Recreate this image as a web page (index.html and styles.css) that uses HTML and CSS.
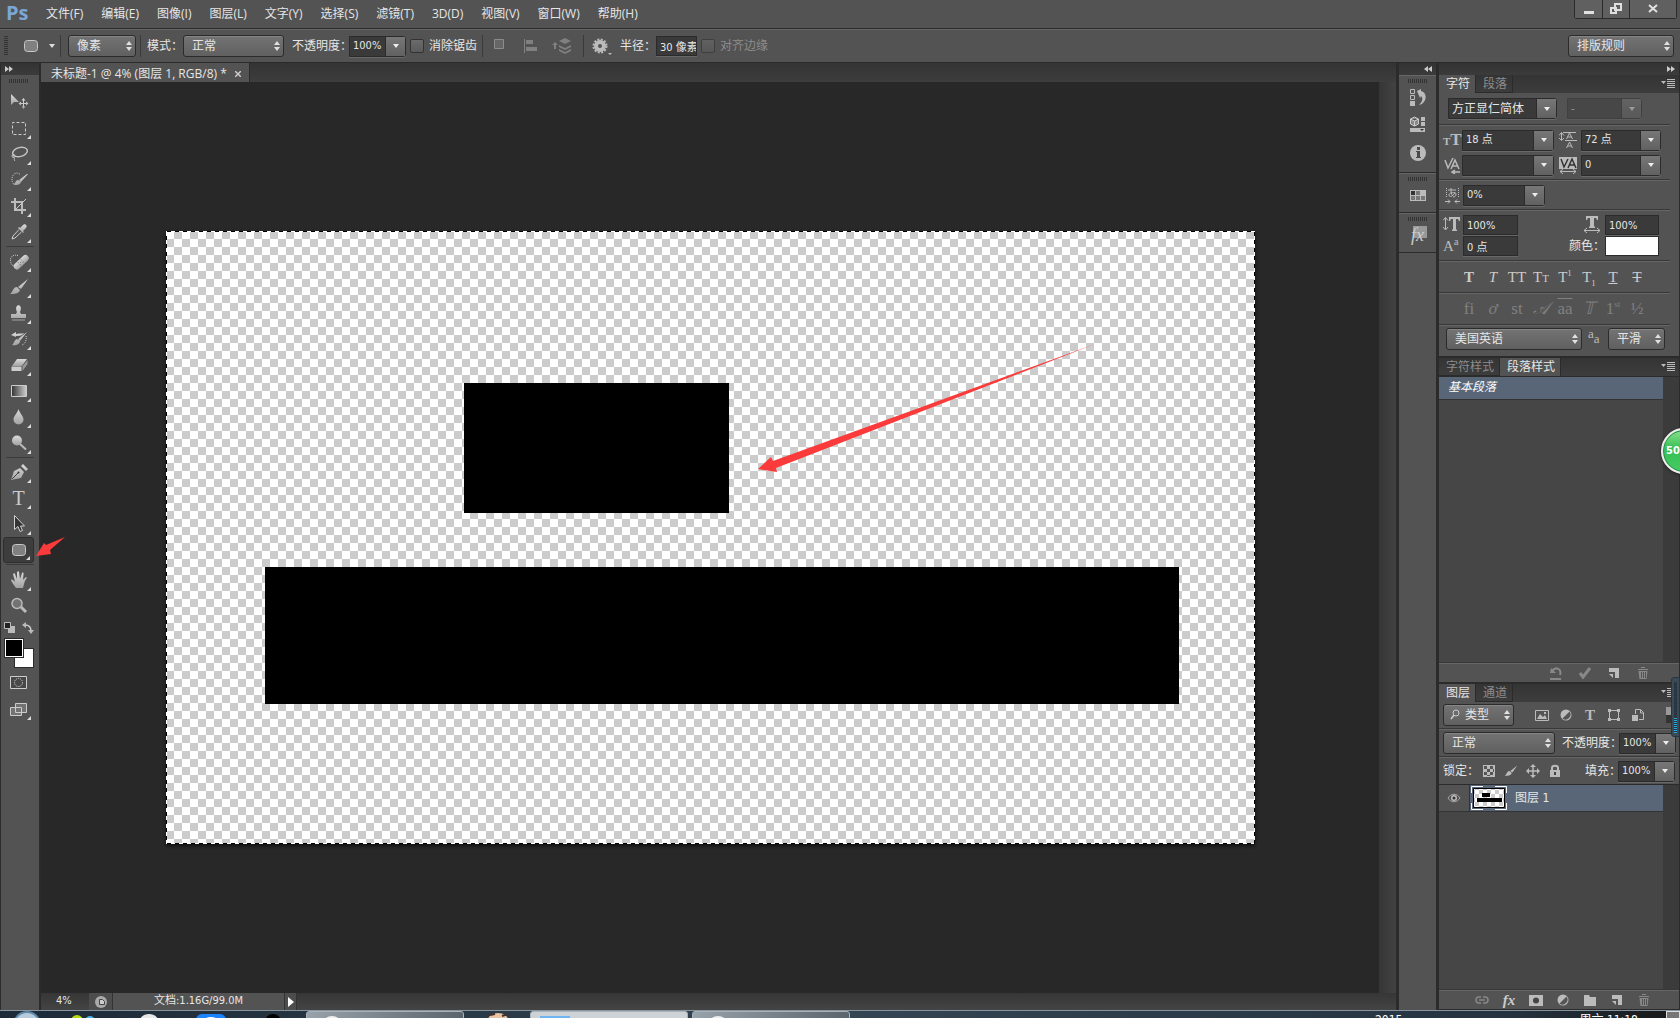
FILE: index.html
```
<!DOCTYPE html>
<html lang="zh-CN">
<head>
<meta charset="utf-8">
<title>未标题-1</title>
<link rel="stylesheet" href="styles.css">
</head>
<body>
<svg class="defs" aria-hidden="true">
  <defs>
    <linearGradient id="metal" x1="0" y1="0" x2="0" y2="1"><stop offset="0" stop-color="#dadada"/><stop offset="1" stop-color="#a2a2a2"/></linearGradient>
    <linearGradient id="fade"><stop offset="0" stop-color="#333"/><stop offset="1" stop-color="#d0d0d0"/></linearGradient>
    <pattern id="checks" width="8" height="8" patternUnits="userSpaceOnUse"><path fill="#fff" d="M0 0h8v8H0z"/><path fill="#ccc" d="M4 0h4v4H4zM0 4h4v4H0z"/></pattern>
  </defs>
  <symbol id="updown" viewBox="0 0 6 10"><path d="M0 4 3 0l3 4zM0 6l3 4 3-4z"/></symbol>
  <symbol id="down" viewBox="0 0 6 4"><path d="M0 0h6L3 4z"/></symbol>
  <symbol id="menu" viewBox="0 0 14 9"><path d="M0 2h5L2.500 5zM6 0h8v1H6zM6 2h8v1H6zM6 4h8v1H6zM6 6h8v1H6zM6 8h8v1H6z"/></symbol>
  <symbol id="dbl" viewBox="0 0 8 6"><path d="M0 0l4 3-4 3zM4 0l4 3-4 3z"/></symbol>
  <symbol id="move" viewBox="0 0 20 20"><path d="M2 2v11l3-3h5z"/><path fill="none" stroke="#ccc" d="M14.500 7v9M10 11.500h9"/><path d="M14.500 6l2 2.500h-4zM14.500 17l2-2.500h-4zM9.500 11.500l2.500-2v4zM19.500 11.500l-2.500-2v4z"/></symbol>
  <symbol id="marquee" viewBox="0 0 20 20"><path fill="none" stroke="#ccc" stroke-dasharray="3 2" stroke-dashoffset="1" d="M3.500 4.500h13v12h-13z"/></symbol>
  <symbol id="lasso" viewBox="0 0 20 20"><ellipse cx="11" cy="8" rx="7.500" ry="4.500" transform="rotate(-14 11 8)" fill="none" stroke="#c4c4c4" stroke-width="1.500"/><circle cx="4.500" cy="12" r="1.500" fill="none" stroke="#c4c4c4"/><path fill="none" stroke="#c4c4c4" d="M4 13c3 1 0 2 2 4"/></symbol>
  <symbol id="quick" viewBox="0 0 20 20"><path fill="none" stroke="#ccc" stroke-dasharray="1 1" d="M11 4.500C8 1 3 4 3 9s3 7 5 5"/><path d="M19 4l-7 8-2-2 8-6zM9 10l3 2c-1 3-5 4-8 2 3 0 2-4 5-4z"/></symbol>
  <symbol id="crop" viewBox="0 0 20 20"><path fill="none" stroke="#bbb" stroke-width="2" d="M6 2v12h11M2 6h11v12"/><path stroke="#ccc" d="M5 15 17 3"/></symbol>
  <symbol id="dropper" viewBox="0 0 20 20"><path d="M11 6l3-3c2-2 5 1 3 3l-3 3 1 1-1 1-5-5 1-1z"/><path fill="#555" stroke="#ccc" d="M10 7.500 4 14l-1 3 3-1 6.500-6"/></symbol>
  <symbol id="heal" viewBox="0 0 20 20"><path fill="none" stroke="#ccc" stroke-dasharray="1 1" d="M9 4.500C4 3 1.500 6 1.500 9s1 5 3 6"/><g transform="rotate(-43 12 11)"><rect x="3" y="8" width="18" height="6.500" rx="3"/><path fill="#666" d="M9 9h1v1H9zM13 9h1v1h-1zM9 12h1v1H9zM13 12h1v1h-1zM11 10.500h1v1h-1z"/></g></symbol>
  <symbol id="brush" viewBox="0 0 20 20"><path d="M19 2l-7 10-3-2zM8 10l3 3c-1 4-6 4-10 4 3-2 3-7 7-7z"/></symbol>
  <symbol id="stamp" viewBox="0 0 20 20"><path d="M8 9C4 0 15 0 11 9l1 2h5v4H2v-4h5zM3 16.500h13v1H3z"/></symbol>
  <symbol id="history" viewBox="0 0 20 20"><path d="M18 3l-7 9-2-2zM8 10l3 2c0 3-4 5-8 4 2-1 2-5 5-6zM2 6l5-3v2c4-1 6 0 8-1-2 3-5 3-8 3v1z"/><path fill="none" stroke="#ccc" stroke-dasharray="1 1" d="M17 7c1 4-1 8-4 9"/></symbol>
  <symbol id="eraser" viewBox="0 0 20 20"><path d="M8 4h10l-5 7H3z"/><path fill="#999" d="M13.500 11.500 18.500 5v4l-5 7z"/><path fill="#ccc" d="M2.500 11.500h10V16h-10z"/></symbol>
  <symbol id="gradient" viewBox="0 0 20 20"><path fill="url(#fade)" stroke="#ccc" d="M2.500 4.500h15v11h-15z"/></symbol>
  <symbol id="blur" viewBox="0 0 20 20"><path d="M9.500 2c1 4 5 7 5 10.500a5 5 0 0 1-10 0C4.500 9 8.500 6 9.500 2z"/></symbol>
  <symbol id="dodge" viewBox="0 0 20 20"><circle cx="8" cy="7.500" r="5"/><path fill="none" stroke="#bbb" stroke-width="2" d="M11 11l6 5.500"/></symbol>
  <symbol id="pen" viewBox="0 0 20 20"><path d="M2 18l3-9 6-3 4 4-3 6zM12 4l2-2 5 5-2 2z"/><path stroke="#444" fill="none" d="M3 17l6-6"/><circle cx="9.500" cy="10.500" r="1" fill="#333"/></symbol>
  <symbol id="patharrow" viewBox="0 0 20 20"><path fill="#333" stroke="#d0d0d0" d="M5.500 1.500v14l3.500-3 2 5 2.500-1-2-4.500h4z"/></symbol>
  <symbol id="rrect" viewBox="0 0 20 20"><rect x="3.500" y="4.500" width="13" height="11" rx="3" fill="#808080" stroke="#c8c8c8"/></symbol>
  <symbol id="hand" viewBox="0 0 20 20"><path d="M7 18c-2-3-4-5-5-8 1-1 2 0 4 2L4 4c1-1 2-1 2 0l2 5V2c1-1 2-1 2 0l1 7 2-6c1-1 2 0 1.500 1L14 10l3-3c1 0 1 1 0 2-2 3-2 6-3 9z"/></symbol>
  <symbol id="zoom" viewBox="0 0 20 20"><path stroke="#bbb" stroke-width="3" d="M12 11l5 5"/><circle cx="8" cy="7.500" r="5" fill="#737373" stroke="#bbb" stroke-width="1.500"/></symbol>
  <symbol id="mask" viewBox="0 0 20 20"><path fill="#484848" stroke="#ccc" d="M1.500 4.500h16v12h-16z"/><circle cx="9.500" cy="10.500" r="4" fill="none" stroke="#ddd" stroke-dasharray="1 1"/></symbol>
  <symbol id="screens" viewBox="0 0 20 20"><path fill="#737373" stroke="#ccc" d="M1.500 8.500h11v8h-11zM6.500 4.500h11v9h-11z"/></symbol>
  <symbol id="new" viewBox="0 0 14 14"><path d="M2 2h10v10H8V6H2zM2 8h4v4z"/></symbol>
  <symbol id="trash" viewBox="0 0 14 14"><path d="M2 3h10v1H2zM5 1h4v1H5zM2.500 5h9l-1 8h-7z"/><path stroke="#535353" d="M5.500 6v6M7.500 6v6M9.500 6v6"/></symbol>
  <symbol id="half" viewBox="0 0 14 14"><circle cx="7" cy="7" r="5.500"/><path fill="#555" d="M3.500 10.500 10.500 3.500a5 5 0 0 1-7 7z"/></symbol>
</svg>

<div class="app">
  <header class="menubar">
    <h1 class="logo">Ps</h1>
    <nav class="menus">
      <a href="#">文件(F)</a><a href="#">编辑(E)</a><a href="#">图像(I)</a><a href="#">图层(L)</a><a href="#">文字(Y)</a><a href="#">选择(S)</a><a href="#">滤镜(T)</a><a href="#">3D(D)</a><a href="#">视图(V)</a><a href="#">窗口(W)</a><a href="#">帮助(H)</a>
    </nav>
    <div class="window-buttons">
      <button aria-label="最小化"><svg width="12" height="12"><path d="M1 8h10v3H1z"/></svg></button>
      <button aria-label="还原"><svg width="12" height="12"><path fill="none" stroke="#e0e0e0" stroke-width="2" d="M5 1h6v6H5zM1 5h5v5H1z"/></svg></button>
      <button class="close" aria-label="关闭"><svg width="12" height="12"><path stroke="#e0e0e0" stroke-width="2" d="M2 2l8 7M10 2 2 9"/></svg></button>
    </div>
  </header>

  <section class="options">
    <i class="grip-v"></i>
    <button class="preset" aria-label="圆角矩形工具"><svg width="20" height="20"><use href="#rrect"/></svg><svg width="6" height="4"><use href="#down"/></svg></button>
    <i class="vline"></i>
    <span class="sel w68"><select aria-label="绘制模式"><option>像素</option></select><svg><use href="#updown"/></svg></span>
    <i class="vline"></i>
    <label for="mode">模式：</label>
    <span class="sel w101"><select id="mode"><option>正常</option></select><svg><use href="#updown"/></svg></span>
    <label class="after" for="opacity">不透明度：</label>
    <span class="combo w56"><input id="opacity" value="100%"><button aria-label="不透明度列表"><svg><use href="#down"/></svg></button></span>
    <label class="tick"><input type="checkbox">消除锯齿</label>
    <i class="vline"></i>
    <button class="icon dim" aria-label="路径操作"><svg width="20" height="20"><path fill="#666" stroke="#8c8c8c" d="M4.500 3.500h9v9h-9z"/></svg></button>
    <button class="icon dim" aria-label="路径对齐"><svg width="20" height="20"><path d="M3 3h1v14H3zM5 4h7v4H5zM5 11h11v4H5z"/></svg></button>
    <button class="icon dim" aria-label="路径排列"><svg width="20" height="20"><path d="M7 5l6-3 6 3-6 3zM7 9l6 3 6-3v2l-6 3-6-3zM7 13l6 3 6-3v2l-6 3-6-3zM3 6l3 3H4v4H2V9H0z"/></svg></button>
    <i class="vline"></i>
    <button class="icon gear" aria-label="几何选项"><svg width="20" height="20"><circle cx="9" cy="10" r="4" fill="none" stroke="#bbb" stroke-width="4"/><circle cx="9" cy="10" r="6.500" fill="none" stroke="#bbb" stroke-width="2" stroke-dasharray="2 1.400"/><path d="M17 17h4l-2 2z"/></svg></button>
    <label for="radius">半径：</label>
    <input class="field radius" id="radius" value="30 像素">
    <label class="tick off"><input type="checkbox" disabled>对齐边缘</label>
    <span class="sel workspace"><select aria-label="工作区"><option>排版规则</option></select><svg><use href="#updown"/></svg></span>
  </section>

  <main class="work">
    <aside class="tools">
      <div class="strip left"><svg width="8" height="6"><use href="#dbl"/></svg></div>
      <i class="grip"></i>
      <div class="toolset">
        <button class="solo" aria-label="移动工具"><svg><use href="#move"/></svg></button>
        <button aria-label="矩形选框工具"><svg><use href="#marquee"/></svg></button>
        <button aria-label="套索工具"><svg><use href="#lasso"/></svg></button>
        <button aria-label="快速选择工具"><svg><use href="#quick"/></svg></button>
        <button aria-label="裁剪工具"><svg><use href="#crop"/></svg></button>
        <button aria-label="吸管工具"><svg><use href="#dropper"/></svg></button>
        <hr>
        <button aria-label="污点修复画笔"><svg><use href="#heal"/></svg></button>
        <button aria-label="画笔工具"><svg><use href="#brush"/></svg></button>
        <button aria-label="仿制图章"><svg><use href="#stamp"/></svg></button>
        <button aria-label="历史记录画笔"><svg><use href="#history"/></svg></button>
        <button aria-label="橡皮擦"><svg><use href="#eraser"/></svg></button>
        <button aria-label="渐变工具"><svg><use href="#gradient"/></svg></button>
        <button aria-label="模糊工具"><svg><use href="#blur"/></svg></button>
        <button aria-label="减淡工具"><svg><use href="#dodge"/></svg></button>
        <hr>
        <button aria-label="钢笔工具"><svg><use href="#pen"/></svg></button>
        <button class="type" aria-label="文字工具">T</button>
        <button aria-label="路径选择工具"><svg><use href="#patharrow"/></svg></button>
        <button class="active" aria-label="圆角矩形工具"><svg><use href="#rrect"/></svg></button>
        <hr>
        <button aria-label="抓手工具"><svg><use href="#hand"/></svg></button>
        <button class="solo" aria-label="缩放工具"><svg><use href="#zoom"/></svg></button>
      </div>
      <div class="mini">
        <svg width="12" height="12"><path d="M4 4h7v7H4z"/><path fill="#222" stroke="#bbb" d="M.5.5h6v6h-6z"/></svg>
        <svg width="12" height="12"><path fill="none" stroke="#ccc" stroke-width="1.500" d="M3 3c4 0 6 2 6 6"/><path d="M0 3l4-3v6zM6 8h6l-3 4z"/></svg>
      </div>
      <div class="swatches"><i class="bg"></i><i class="fg"></i></div>
      <div class="toolset modes">
        <button class="solo" aria-label="快速蒙版"><svg><use href="#mask"/></svg></button>
        <button aria-label="屏幕模式"><svg><use href="#screens"/></svg></button>
      </div>
    </aside>

    <section class="document">
      <div class="doc-tabs"><a class="doc-tab" href="#">未标题-1 @ 4% (图层 1, RGB/8) * <svg width="6" height="6"><path stroke="#ccc" stroke-width="1.500" d="M0 0l6 6M6 0 0 6"/></svg></a></div>
      <div class="doc-body">
        <div class="stage">
          <svg class="canvas" viewBox="0 0 1089 613" role="img" aria-label="画布">
            <defs><pattern id="board" width="16" height="16" patternUnits="userSpaceOnUse"><path fill="#fff" d="M0 0h16v16H0z"/><path fill="#ccc" d="M8 0h8v8H8zM0 8h8v8H0z"/></pattern></defs>
            <g shape-rendering="crispEdges">
            <rect width="1089" height="613" fill="url(#board)"/>
            <path d="M.5.5h1088v612H.5z" fill="none" stroke="#fff"/>
            <path d="M.5.5h1088v612H.5z" fill="none" stroke="#000" stroke-dasharray="4 4"/>
            <path fill="#000" d="M298 152h265v130H298zM99 336h914v137H99z"/></g>
            <path fill="#fb3b3b" d="M592 238l13-12 2 4L929 113 610 237l1 4z"/>
          </svg>
          <svg class="pointer" width="30" height="20"><path fill="#fb3b3b" d="M0 19 8 6l2 2L29 0 14 13l1 4z"/></svg>
        </div>
        <div class="vscroll"></div>
      </div>
      <footer class="status">
        <span class="percent">4%</span>
        <button aria-label="状态"><svg width="12" height="12"><circle cx="6" cy="6" r="6" fill="#aaa"/><path fill="#ccc" stroke="#444" d="M4.500 3.500h3l2 2v3h-5z"/></svg></button>
        <span class="size">文档:1.16G/99.0M</span>
        <button class="more" aria-label="更多"><svg width="6" height="10"><path d="M0 0l6 5-6 5z"/></svg></button>
      </footer>
    </section>

    <aside class="dock">
      <div class="strip right"><svg class="flip" width="8" height="6"><use href="#dbl"/></svg></div>
      <div class="dock-group tall">
        <i class="grip"></i>
        <button aria-label="历史记录"><svg width="18" height="18"><path fill="#535353" stroke="#bbb" d="M1.500 1.500h4v4h-4zM1.500 7.500h4v4h-4z"/><path d="M1 13h5v5H1zM8 3l4-2v2c5 1 7 8 1 13l-3 1c4-4 4-7 2-9l-1 2z"/></svg></button>
        <button aria-label="属性"><svg width="18" height="18"><path fill="#888" stroke="#ccc" d="M5.500 1l4 2v5l-4 2-4-2V3zM1.500 3l4 2 4-2M5.500 5v5"/><path d="M12 1h4v4h-4zM12 6h4v4h-4zM1 12h15v4H1z"/><path fill="#333" d="M11 13h4l-2 2z"/></svg></button>
        <button aria-label="信息"><svg width="18" height="18"><circle cx="9" cy="9" r="8"/><path fill="#4a4a4a" d="M8 3h3v3H8zM7 7h4v6h1v1H7v-1h1V8H7z"/></svg></button>
      </div>
      <div class="dock-group">
        <i class="grip"></i>
        <button aria-label="色板"><svg width="18" height="18"><path fill="#bbb" d="M1 4h16v11H1z"/><path fill="#333" d="M2 5h4v4H2z"/><path fill="#777" d="M7 5h4v4H7zM2 10h4v4H2zM7 10h4v4H7zM12 10h4v4h-4z"/></svg></button>
      </div>
      <div class="dock-group">
        <i class="grip"></i>
        <button class="fx" aria-label="样式"><i></i>fx</button>
      </div>
    </aside>

    <aside class="panels">
      <div class="strip right"><svg width="8" height="6"><use href="#dbl"/></svg></div>
      <section class="panel">
        <div class="tabs"><a class="on" href="#">字符</a><a href="#">段落</a><svg><use href="#menu"/></svg></div>
        <div class="row first"><span class="combo w109"><input aria-label="字体" class="cjk" value="方正显仁简体"><button aria-label="字体列表"><svg><use href="#down"/></svg></button></span><span class="combo w74 disabled"><input aria-label="字体样式" value="-" disabled><button disabled aria-label="样式列表"><svg><use href="#down"/></svg></button></span></div>
        <hr>
        <div class="grid">
          <b class="glyph"><small>T</small>T</b><span class="combo"><input aria-label="字号" value="18 点"><button aria-label="字号列表"><svg><use href="#down"/></svg></button></span>
          <svg class="gi" width="18" height="18"><path fill="none" stroke="#bbb" d="M4 1.500h13M6 9.500h12M2.500 2v7M0 4.500l2.500-3 2.500 3M0 7l2.500 2.500L5 7M7.500 8l3-6 3 6M8.500 6h4M7.500 17l3-6 3 6M8.500 15h4"/></svg><span class="combo"><input aria-label="行距" value="72 点"><button aria-label="行距列表"><svg><use href="#down"/></svg></button></span>
          <svg class="gi" width="18" height="18"><path fill="none" stroke="#bbb" stroke-width="1.500" d="M1 4l3 8L9 2M7 13l4-9 4 9M9 10h4M9 16h7M11 14l-3 2 3 2"/></svg><span class="combo"><input aria-label="字距微调" value=""><button aria-label="微调列表"><svg><use href="#down"/></svg></button></span>
          <svg class="gi" width="18" height="18"><path d="M0 1h18v12H0z"/><path fill="none" stroke="#333" stroke-width="1.500" d="M2 3l3 8 4-8M9 12l4-9 4 9M10 9h6"/><path fill="none" stroke="#bbb" d="M1 15.500h16M4 13l-3 2.500L4 18M14 13l3 2.500-3 2.500"/></svg><span class="combo"><input aria-label="字距" value="0"><button aria-label="字距列表"><svg><use href="#down"/></svg></button></span>
        </div>
        <hr>
        <div class="row tsume"><svg class="gi" width="18" height="18"><path fill="none" stroke="#bbb" stroke-dasharray="1 1" d="M3.500 2v10M15.500 2v10"/><path fill="none" stroke="#bbb" d="M5 4h8M8 2c0 4 0 6 2 8M12 6c-1 4-6 6-6 3s7-3 7-1-1 3-3 3M2 15.500h5M5 13.500l2 2-2 2M17 15.500h-5M14 13.500l-2 2 2 2"/></svg><span class="combo w82"><input aria-label="比例间距" value="0%"><button aria-label="间距列表"><svg><use href="#down"/></svg></button></span></div>
        <hr>
        <div class="grid scale">
          <svg class="gi" width="18" height="18"><path fill="none" stroke="#bbb" d="M2.500 2v11M0 4.500l2.500-3 2.500 3M0 11l2.500 3L5 11"/><path d="M6 1h11v4h-1l-1-2h-2v10l1 1v1h-5v-1l1-1V3H8L7 5H6z"/></svg><input class="field" aria-label="垂直缩放" value="100%"><svg class="gi end" width="18" height="18"><path d="M3 0h12v4h-1l-1-2h-2v8l1 1v1H6v-1l1-1V2H5L4 4H3z"/><path fill="none" stroke="#bbb" d="M1 14.500h16M4 12l-3 2.500L4 17M14 12l3 2.500-3 2.500"/></svg><input class="field" aria-label="水平缩放" value="100%">
          <b class="glyph base">A<sup>a</sup></b><input class="field" aria-label="基线偏移" value="0 点"><label for="ink">颜色：</label><button id="ink" class="ink"></button>
        </div>
        <hr>
        <div class="faux"><button><b>T</b></button><button><i>T</i></button><button>TT</button><button>T<small>T</small></button><button>T<sup>1</sup></button><button>T<sub>1</sub></button><button><u>T</u></button><button><s>T</s></button></div>
        <hr>
        <div class="faux off"><button>fi</button><button><i>ơ</i></button><button>st</button><button><i>𝒜</i></button><button class="over">aa</button><button><i>𝕋</i></button><button>1<sup>st</sup></button><button>½</button></div>
        <hr>
        <div class="row lang"><span class="sel w136"><select aria-label="语言"><option>美国英语</option></select><svg><use href="#updown"/></svg></span><span class="aa"><sup>a</sup>a</span><span class="sel w56"><select aria-label="消除锯齿方式"><option>平滑</option></select><svg><use href="#updown"/></svg></span></div>
      </section>

      <section class="panel styles">
        <div class="tabs"><a href="#">字符样式</a><a class="on" href="#">段落样式</a><svg><use href="#menu"/></svg></div>
        <div class="list"><div class="items"><a class="item" href="#">基本段落</a></div></div>
        <div class="foot"><button class="weak" aria-label="复位"><svg><path fill="none" stroke="#888" stroke-width="2" d="M3 5c4-5 10-2 8 4M1 13h11"/><path fill="#888" d="M1 7l1-5 5 5z"/></svg></button><button class="weak" aria-label="应用"><svg><path fill="none" stroke="#888" stroke-width="3" d="M2 7l3 4 7-9"/></svg></button><button aria-label="新建样式"><svg><use href="#new"/></svg></button><button class="weak" aria-label="删除样式"><svg><use href="#trash"/></svg></button></div>
      </section>

      <section class="panel layers">
        <div class="tabs"><a class="on" href="#">图层</a><a href="#">通道</a><svg><use href="#menu"/></svg></div>
        <div class="row filter"><span class="sel w71 search"><svg class="lens"><circle cx="6" cy="4" r="3" fill="none" stroke="#ccc"/><path stroke="#ccc" stroke-width="1.500" d="M4 6 1 10"/></svg><select aria-label="过滤类型"><option>类型</option></select><svg><use href="#updown"/></svg></span>
          <div class="filters"><button aria-label="像素图层"><svg><path fill="none" stroke="#bbb" d="M.5 2.500h13v10H.5z"/><path d="M2 11l3-5 3 3 2-2 2 4zM9 4h2v2H9z"/></svg></button><button aria-label="调整图层"><svg><use href="#half"/></svg></button><button class="t" aria-label="文字图层">T</button><button aria-label="形状图层"><svg><path fill="none" stroke="#bbb" d="M2.500 2.500h9v9h-9z"/><path d="M1 1h3v3H1zM10 1h3v3h-3zM1 10h3v3H1zM10 10h3v3h-3z"/></svg></button><button aria-label="智能对象"><svg><path fill="none" stroke="#bbb" d="M4.500 6V1.500h5l3 3v7H8M9.500 2v3h3"/><path d="M1 7h6v6H1z"/></svg></button></div><i class="switch"></i></div>
        <hr>
        <div class="row blend"><span class="sel w112"><select aria-label="混合模式"><option>正常</option></select><svg><use href="#updown"/></svg></span><label for="lo">不透明度：</label><span class="combo w56"><input id="lo" value="100%"><button aria-label="不透明度列表"><svg><use href="#down"/></svg></button></span></div>
        <hr>
        <div class="row lock"><span>锁定：</span><div class="locks"><button aria-label="锁定透明像素"><svg><path fill="#bbb" d="M1 1h12v12H1z"/><path fill="#555" d="M2 2h3v3H2zM8 2h3v3H8zM5 5h3v3H5zM2 8h3v3H2zM8 8h3v3H8zM11 5h1v3h-1zM5 11h3v1H5z"/></svg></button><button aria-label="锁定图像像素"><svg><use href="#brush"/></svg></button><button aria-label="锁定位置"><svg><path stroke="#bbb" stroke-width="1.500" d="M7 2v10M2 7h10"/><path d="M7 0l3 3H4zM7 14l3-3H4zM0 7l3-3v6zM14 7l-3-3v6z"/></svg></button><button aria-label="锁定全部"><svg><path d="M2 6h10v7H2z"/><path fill="none" stroke="#bbb" stroke-width="2" d="M4 7V4c0-3 6-3 6 0v3"/><path fill="#444" d="M6 8h2v3H6z"/></svg></button></div><label for="fill">填充：</label><span class="combo w56"><input id="fill" value="100%"><button aria-label="填充列表"><svg><use href="#down"/></svg></button></span></div>
        <div class="list"><div class="items"><div class="layer"><button class="eye" aria-label="可见性"><svg width="14" height="10"><path fill="none" stroke="#aaa" d="M1 5c3-5 9-5 12 0-3 5-9 5-12 0z"/><circle cx="7" cy="5" r="3"/><circle cx="7" cy="5" r="1.500" fill="#333"/></svg></button><a href="#"><svg width="36" height="24"><path fill="url(#checks)" stroke="#000" d="M2.500 2.500h31v19h-31z"/><path fill="#000" d="M11 7h8v4h-8zM6 12h25v4H6z"/><path fill="none" stroke="#fff" d="M.5 7V.5H12M24 .5h11.500V7M.5 17v6.500H12M24 23.500h11.500V17"/></svg>图层 1</a></div></div></div>
        <div class="foot"><button class="weak" aria-label="链接图层"><svg><path fill="none" stroke="#888" stroke-width="1.500" d="M6 10H4C0 10 0 4 4 4h2M8 4h2c4 0 4 6 0 6H8M4 7h6"/></svg></button><button class="script" aria-label="图层样式">fx</button><button aria-label="添加蒙版"><svg><path d="M0 2h14v11H0z"/><circle cx="7" cy="7.500" r="3" fill="#444"/></svg></button><button aria-label="新建调整图层"><svg><use href="#half"/></svg></button><button aria-label="新建组"><svg><path d="M1 2h5l1 2h6v9H1z"/></svg></button><button aria-label="新建图层"><svg><use href="#new"/></svg></button><button class="weak" aria-label="删除图层"><svg><use href="#trash"/></svg></button></div>
      </section>
    </aside>
    <div class="bubble">50</div>
    <div class="meter"><i></i></div>
  </main>

  <footer class="taskbar">
    <svg class="launch" width="306" height="8"><circle cx="27" cy="14" r="13" fill="#b7cbdc" stroke="#5f87a8" stroke-width="2"/><circle cx="77" cy="10" r="6" fill="#b9d916"/><circle cx="90" cy="10" r="5" fill="#45b5e8"/><circle cx="149" cy="14" r="11" fill="#e8e8e8"/><circle cx="149" cy="14" r="7" fill="#8b1d2b"/><rect x="196" y="3" width="30" height="20" rx="6" fill="#1b83fb"/><ellipse cx="211" cy="12" rx="9" ry="6" fill="#fff"/><circle cx="273" cy="11" r="8" fill="#000"/></svg>
    <button class="task" aria-label="浏览器"><i></i></button>
    <svg class="face" width="62" height="8"><ellipse cx="30" cy="9" rx="10" ry="7" fill="#e9c3a4"/><path stroke="#42302a" stroke-width="2" d="M22 4l5-1M34 5l6-2"/></svg>
    <button class="task light" aria-label="Photoshop"><i class="square"></i></button>
    <button class="task" aria-label="窗口"><i></i></button>
    <span class="year">2015</span><span class="clock">周六 11:18</span><button class="desktop" aria-label="显示桌面"></button>
  </footer>
</div>
</body>
</html>
```
FILE: styles.css
```
* { box-sizing: border-box; }
body { margin: 0; background: #282828; color: #e6e6e6; font: 12px/16px "DejaVu Sans Condensed", "Noto Sans CJK SC", sans-serif; }
button, input, select { margin: 0; padding: 0; border: 0; border-radius: 0; background: none; color: inherit; font: inherit; }
a { color: inherit; text-decoration: none; }
svg { display: block; flex: none; fill: #bbb; }
i { display: block; }
.defs { position: absolute; width: 0; height: 0; }
.app { display: flex; flex-direction: column; height: 100vh; overflow: hidden; }

/* menu bar */
.menubar { display: flex; height: 29px; background: #535353; border-bottom: 1px solid #2b2b2b; }
.logo { margin: 0 0 0 6px; width: 40px; font: bold 20px/26px "Open Sans", sans-serif; color: #7ba7d7; }
.menus { display: flex; gap: 18px; flex: 1; font: 12px/28px "Open Sans", "Noto Sans CJK SC", sans-serif; white-space: nowrap; }
.window-buttons { display: flex; height: 19px; margin-right: 3px; border: 1px solid #2b2b2b; border-top: 0; border-radius: 0 0 3px 3px; }
.window-buttons button { display: grid; place-items: center; width: 27px; background: #606060; }
.window-buttons button + button { border-left: 1px solid #2b2b2b; }
.window-buttons .close { width: 47px; }
.window-buttons svg { fill: #e0e0e0; }

/* shared controls */
.sel { position: relative; display: block; flex: none; }
.sel select { width: 100%; height: 22px; display: block; padding-left: 8px; appearance: none; border: 1px solid #2b2b2b; border-radius: 3px; background: linear-gradient(#737373, #606060); box-shadow: inset 0 1px #858585; }
.sel svg { position: absolute; right: 4px; top: 6px; width: 6px; height: 10px; fill: #e0e0e0; }
.combo { display: flex; flex: none; height: 21px; border: 1px solid #2b2b2b; border-radius: 0 3px 3px 0; background: #3a3a3a; box-shadow: 0 1px #686868; }
.combo input { flex: 1; min-width: 0; padding-left: 3px; }
.combo input, .field { font-size: 11px; }
.combo .cjk { font-size: 12px; }
.combo button { display: grid; place-items: center; width: 20px; border-left: 1px solid #2b2b2b; background: linear-gradient(#777, #616161); }
.combo svg { width: 6px; height: 4px; fill: #eee; }
.disabled { opacity: .45; }
.field { height: 20px; padding-left: 3px; border: 1px solid #2b2b2b; background: #3a3a3a; box-shadow: 0 1px #686868; min-width: 0; }
.w56 { width: 57px; } .w68 { width: 68px; } .w71 { width: 71px; } .w74 { width: 75px; } .w82 { width: 82px; } .w101 { width: 101px; } .w109 { width: 109px; } .w112 { width: 112px; } .w136 { width: 136px; }

/* options bar */
.options { display: flex; align-items: center; height: 34px; padding-right: 6px; background: #535353; border-top: 1px solid #666; border-bottom: 1px solid #2b2b2b; white-space: nowrap; }
.grip-v { width: 4px; height: 20px; margin: 0 13px 0 4px; background: repeating-linear-gradient(#333 0 1px, transparent 1px 2px); }
.preset { display: flex; align-items: center; gap: 8px; }
.preset svg + svg { fill: #ddd; }
.vline { width: 1px; height: 22px; margin: 0 7px 0 5px; background: #3a3a3a; }
.options .after { margin: 0 -3px 0 8px; }
.options .sel + .vline { margin: 0 6px 0 4px; }
.options .tick { display: flex; align-items: center; gap: 5px; margin-left: 4px; }
.tick input { appearance: none; width: 14px; height: 14px; border: 1px solid #333; border-radius: 2px; background: linear-gradient(#6b6b6b, #5a5a5a); }
.off { color: #8c8c8c; }
.off input { opacity: .6; }
.icon { margin-right: 11px; }
.dim svg { fill: #808080; }
.icon + .vline { margin-left: 0; }
.gear svg { overflow: visible; }
.gear { margin-right: 9px; }
.radius { width: 41px; }
.workspace { margin-left: auto; width: 106px; }

/* work area */
.work { position: relative; display: flex; flex: 1; min-height: 0; overflow: hidden; background: #2b2b2b; }
.strip { display: flex; align-items: center; height: 12px; padding: 0 4px; background: linear-gradient(#333, #3b3b3b); }
.strip.right { justify-content: flex-end; }
.strip svg { fill: #ccc; }
.flip { transform: scaleX(-1); }
.grip { width: 20px; height: 4px; background: repeating-linear-gradient(90deg, #333 0 1px, transparent 1px 2px); }
.tools { width: 38px; margin-left: 1px; background: #535353; flex: none; }
.tools > .grip { margin: 4px 0 6px 8px; }
.toolset button { position: relative; display: grid; place-items: center; width: 31px; height: 26px; margin-left: 2px; }
.toolset svg { width: 20px; height: 20px; fill: url(#metal); }
.toolset button:not(.solo)::after { content: ""; position: absolute; right: 3px; bottom: 2px; border: 2px solid #ddd; border-top-color: transparent; border-left-color: transparent; }
.toolset hr { margin: 1px 5px; border: 0; height: 1px; background: #3a3a3a; }
.toolset .active { border: 1px solid #2e2e2e; border-radius: 3px; background: #3d3d3d; }
.active + hr { margin-bottom: 2px; }
.toolset .type { font: 20px/26px "Liberation Serif", serif; color: #ccc; }
.mini { display: flex; gap: 6px; padding: 3px 0 0 3px; }
.swatches { position: relative; height: 31px; margin: 4px 0 0 3px; }
.swatches i { position: absolute; width: 20px; height: 20px; border: 1px solid #2b2b2b; }
.bg { left: 10px; top: 10px; background: #fff; }
.fg { left: 0; top: 0; background: #000; box-shadow: inset 0 0 0 1px #fff; }
.modes { display: grid; gap: 1px; }

.document { display: flex; flex-direction: column; flex: 1; min-width: 0; margin-left: 2px; }
.doc-tabs { display: flex; height: 19px; background: linear-gradient(#343434, #3d3d3d); }
.doc-tab { display: flex; align-items: center; gap: 8px; padding: 2px 8px 0 10px; background: #535353; border-right: 1px solid #2b2b2b; font: 12px/17px "Open Sans", "Noto Sans CJK SC", sans-serif; }
.doc-body { display: flex; flex: 1; min-height: 0; }
.stage { position: relative; flex: 1; padding: 149px 124px 0 125px; background: #282828; }
.canvas { width: 100%; box-shadow: 0 2px 3px #111; }
.pointer { position: absolute; left: -5px; top: 455px; }
.vscroll { width: 17px; background: linear-gradient(90deg, #363636, #424242); }
.status { display: flex; height: 17px; background: linear-gradient(#363636, #444); font-size: 11px; }
.percent { width: 48px; padding-left: 15px; }
.status button { display: grid; place-items: center; width: 24px; background: #4d4d4d; border-right: 1px solid #333; }
.size { width: 171px; background: #535353; text-align: center; }
.status .more { width: 13px; border-left: 1px solid #333; }
.more svg { fill: #fff; }

.dock { width: 37px; margin: 0 3px; flex: none; background: #535353; }
.dock-group { display: grid; justify-items: center; align-content: start; height: 40px; border-bottom: 1px solid #2b2b2b; border-top: 1px solid #666; }
.dock-group.tall { height: 98px; }
.dock .grip { margin-top: 3px; }
.dock button { display: grid; place-items: center; width: 28px; height: 28px; }
.dock .fx { position: relative; isolation: isolate; font: italic 18px/24px "Liberation Serif", serif; color: #ccc; }
.fx i { position: absolute; right: 5px; top: 5px; width: 14px; height: 12px; background: #999; z-index: -1; }

/* panels */
.panels { display: flex; flex-direction: column; width: 240px; flex: none; margin-right: 1px; }
.panels > .strip { flex: none; }
.panel { flex: none; margin-bottom: 1px; background: #535353; border-bottom: 1px solid #2b2b2b; }
.panel > hr { margin: 0 9px 0 0; height: 2px; border: 0; border-top: 1px solid #383838; border-bottom: 1px solid #666; }
.tabs { display: flex; height: 18px; background: linear-gradient(#343434, #3d3d3d); line-height: 17px; font-family: "Open Sans", "Noto Sans CJK SC", sans-serif; }
.tabs a { padding: 0 5px 0 7px; border-right: 1px solid #2b2b2b; border-bottom: 1px solid #2b2b2b; color: #8c8c8c; }
.tabs .on { background: #535353; border-bottom: 0; color: #e6e6e6; }
.tabs svg { width: 14px; height: 9px; margin: 4px 4px 0 auto; }
.row { display: flex; align-items: center; height: 28px; }
.first { height: 31px; gap: 10px; padding-left: 9px; }
.grid { display: grid; grid-template-columns: 19px 92px 27px 80px; row-gap: 4px; align-items: center; align-content: center; height: 53px; padding-left: 4px; }
.grid .combo + .gi { justify-self: center; }
.glyph { font: bold 17px/18px "Liberation Serif", serif; color: #bbb; white-space: nowrap; }
.glyph small { font-size: 11px; }
.base { font-weight: normal; font-size: 15px; }
.base sup { font-size: 11px; line-height: 1px; }
.tsume { gap: 2px; padding-left: 4px; }
.scale { grid-template-columns: 20px 55px 87px 54px; grid-auto-rows: 20px; row-gap: 1px; height: 49px; }
.scale .end { justify-self: end; margin-right: 4px; }
.scale label { justify-self: end; white-space: nowrap; }
.ink { height: 20px; border: 1px solid #2b2b2b; background: #fff; }
.faux { display: grid; grid-template-columns: repeat(8, 24px); height: 30px; padding-left: 18px; }
.faux button { font: 15px/28px "Liberation Serif", serif; color: #ccc; text-align: center; white-space: nowrap; }
.faux sup, .faux sub { font-size: 9px; line-height: 1px; }
.faux small { font-size: 11px; }
.faux.off button { color: #808080; font-size: 17px; }
.faux .over { text-decoration: overline; }
.lang { height: 30px; gap: 6px; padding: 0 0 4px 7px; }
.aa { width: 14px; color: #bbb; font: 13px/16px "Liberation Serif", serif; }
.aa sup { font-size: 13px; line-height: 1px; }
.list { display: flex; flex: 1; min-height: 0; padding-right: 16px; background: #3b3b3b; border-top: 1px solid #2b2b2b; border-bottom: 1px solid #383838; }
.items { flex: 1; background: #464646; }
.styles { display: flex; flex-direction: column; height: 325px; }
.item { display: block; height: 23px; padding-left: 9px; background: #596678; border-bottom: 1px solid #333; font-style: italic; line-height: 20px; color: #fff; }
.foot { display: flex; justify-content: flex-end; gap: 13px; height: 19px; padding-right: 28px; border-top: 1px solid #666; }
.foot button, .filters button, .locks button { display: grid; place-items: center; width: 16px; }
.foot svg, .filters svg, .locks svg { width: 14px; height: 14px; }
.weak svg { fill: #888; }
.layers .foot { gap: 11px; padding-right: 27px; }
.layers { display: flex; flex-direction: column; flex: 1; min-height: 0; margin-bottom: 0; overflow: hidden; }
.layers > hr { margin: 0; flex: none; }
.layers .tabs, .layers .row, .layers .foot { flex: none; }
.layers .row { height: 26px; padding-left: 4px; }
.search select { padding-left: 21px; }
.search .lens { left: 7px; top: 5px; width: 10px; height: 12px; z-index: 1; }
.filters { display: flex; gap: 8px; margin-left: 20px; }
.filters .t { font: bold 15px/16px "Liberation Serif", serif; color: #bbb; }
.switch { width: 5px; height: 16px; margin-left: auto; margin-right: 8px; background: linear-gradient(#999 50%, #333 50%); }
.row.blend label { margin: 0 -3px 0 7px; }
.row.blend, .row.lock { padding-right: 4px; white-space: nowrap; }
.blend .combo { margin-left: auto; }
.locks { display: flex; gap: 6px; margin-left: 2px; }
.lock label { margin: 0 -3px 0 auto; }
.layer { display: flex; height: 27px; background: #535353; border-bottom: 1px solid #333; }
.eye { display: grid; place-items: center; width: 31px; border-right: 1px solid #333; }
.layer a { display: flex; align-items: center; gap: 8px; flex: 1; padding-left: 1px; background: #596678; }
.script { font: italic bold 15px/16px "Liberation Serif", serif; color: #ccc; }

.bubble { position: absolute; right: -27px; top: 365px; width: 46px; height: 46px; padding-left: 3px; border: 2px solid #eee; border-radius: 50%; background: linear-gradient(#8be08b, #36bf56 45%, #45cd63); box-shadow: inset 0 0 0 1px #248a48, 0 1px 3px #222; color: #fff; font: bold 11px/42px "DejaVu Sans Condensed", sans-serif; }
.meter { position: absolute; right: 0; top: 614px; width: 9px; height: 60px; padding: 4px 2px; border: 1px solid #243645; border-radius: 3px 0 0 3px; background: #3c4a56; }
.meter i { height: 51px; background: repeating-linear-gradient(transparent 0 1px, #26323c 1px 2px), linear-gradient(#2d3a49 68%, #27a9df 68%); }

/* desktop taskbar */
.taskbar { display: flex; height: 8px; flex: none; overflow: hidden; background: linear-gradient(90deg, #1d2a37, #354553 50%, #253340 90%, #181818); border-top: 1px solid #8795a0; }
.task { width: 158px; height: 30px; margin-right: 4px; flex: none; border: 1px solid #aab3ba; border-radius: 3px; background: linear-gradient(90deg, #98a2aa, #59646d); }
.task.light { background: #ccd2d6; }
.task i { width: 22px; height: 22px; margin: 2px 0 0 14px; border-radius: 50%; background: #eee; }
.task .square { border-radius: 0; width: 30px; background: #202b60; border-top: 3px solid #6fb4f1; margin-left: 9px; }
.year { margin-left: auto; margin-right: 177px; line-height: 18px; color: #fff; }
.clock { margin-right: 28px; line-height: 18px; color: #fff; white-space: nowrap; }
.desktop { width: 14px; height: 20px; border: 1px solid #ddd; background: #777; }
```
